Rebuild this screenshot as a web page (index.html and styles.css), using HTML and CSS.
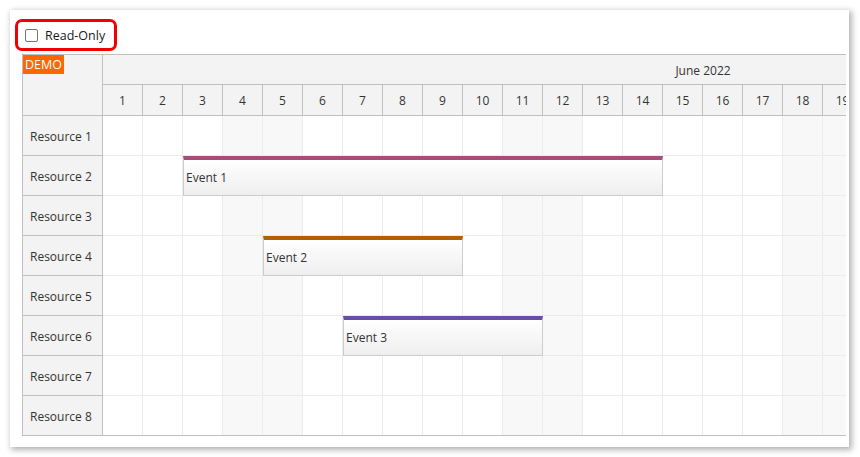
FILE: index.html
```html
<!DOCTYPE html>
<html>
<head>
<meta charset="utf-8">
<link rel="stylesheet" href="styles.css">
</head>
<body>
<div class="panel">
  <label class="ro"><span class="cb"></span><span class="ro-text">Read-Only</span></label>
  <div class="sched">
    <div class="rh">
      <div class="corner"><span class="demo">DEMO</span></div>
      <div class="rhc">Resource 1</div>
      <div class="rhc">Resource 2</div>
      <div class="rhc">Resource 3</div>
      <div class="rhc">Resource 4</div>
      <div class="rhc">Resource 5</div>
      <div class="rhc">Resource 6</div>
      <div class="rhc">Resource 7</div>
      <div class="rhc">Resource 8</div>
    </div>
    <div class="tl">
      <div class="tl-inner">
        <div class="month">June 2022</div>
        <div class="days">
          <div class="day">1</div><div class="day">2</div><div class="day">3</div><div class="day">4</div><div class="day">5</div>
          <div class="day">6</div><div class="day">7</div><div class="day">8</div><div class="day">9</div><div class="day">10</div>
          <div class="day">11</div><div class="day">12</div><div class="day">13</div><div class="day">14</div><div class="day">15</div>
          <div class="day">16</div><div class="day">17</div><div class="day">18</div><div class="day">19</div><div class="day">20</div>
          <div class="day">21</div><div class="day">22</div><div class="day">23</div><div class="day">24</div><div class="day">25</div>
          <div class="day">26</div><div class="day">27</div><div class="day">28</div><div class="day">29</div><div class="day">30</div>
        </div>
        <div class="grid">
          <div class="cols">
            <div class="col"></div><div class="col"></div><div class="col"></div><div class="col we"></div><div class="col we"></div>
            <div class="col"></div><div class="col"></div><div class="col"></div><div class="col"></div><div class="col"></div>
            <div class="col we"></div><div class="col we"></div><div class="col"></div><div class="col"></div><div class="col"></div>
            <div class="col"></div><div class="col"></div><div class="col we"></div><div class="col we"></div><div class="col"></div>
            <div class="col"></div><div class="col"></div><div class="col"></div><div class="col"></div><div class="col we"></div>
            <div class="col we"></div><div class="col"></div><div class="col"></div><div class="col"></div><div class="col"></div>
          </div>
          <div class="rowlines"></div>
          <div class="ev ev1" style="top:40px;left:80px;width:480px">Event 1</div>
          <div class="ev ev2" style="top:120px;left:160px;width:200px">Event 2</div>
          <div class="ev ev3" style="top:200px;left:240px;width:200px">Event 3</div>
        </div>
      </div>
    </div>
  </div>
</div>
</body>
</html>
```
FILE: styles.css
```css
html, body {
  margin: 0;
  padding: 0;
  background: #ffffff;
}
body {
  height: 457px;
  overflow: hidden;
  font-family: "Open Sans", "Noto Sans", sans-serif;
  font-size: 12px;
  color: #333;
}
.panel {
  position: relative;
  margin: 10px 0 0 10px;
  width: 839px;
  height: 437px;
  background: #fff;
  box-shadow: 2px 2px 6px 1px rgba(0, 0, 0, 0.3);
  padding: 9px 0 0 5px;
  box-sizing: border-box;
}
.ro {
  display: inline-flex;
  align-items: center;
  height: 32px;
  width: 102px;
  box-sizing: border-box;
  border: 3px solid #f00000;
  border-radius: 7px;
  padding: 1px 0 0 7px;
  font-size: 12.5px;
  color: #1a1a1a;
}
.cb {
  width: 13px;
  height: 13px;
  box-sizing: border-box;
  border: 1px solid #767676;
  border-radius: 2px;
  background: #fff;
  margin: -1px 7px 0 0;
}
.sched {
  display: flex;
  margin: 3px 0 0 7px;
  width: 823px;
  border-left: 1px solid #c0c0c0;
  border-top: 1px solid #c0c0c0;
  border-bottom: 1px solid #c0c0c0;
}
.rh {
  width: 80px;
  flex: none;
  border-right: 1px solid #c0c0c0;
  box-sizing: border-box;
  background: #f3f3f3;
}
.corner {
  height: 60px;
  border-bottom: 1px solid #c0c0c0;
}
.demo {
  display: inline-block;
  background: #ff6600;
  color: #fff;
  font-size: 12.5px;
  line-height: 19px;
  padding: 0 2px;
}
.rhc {
  height: 39px;
  border-bottom: 1px solid #c0c0c0;
  display: flex;
  align-items: center;
  padding: 2px 0 0 7px;
  box-sizing: border-box;
  height: 40px;
}
.rhc:last-child {
  border-bottom: none;
  height: 39px;
}
.tl {
  flex: 1;
  overflow: hidden;
}
.tl-inner {
  width: 1200px;
}
.month {
  height: 29px;
  border-bottom: 1px solid #c0c0c0;
  background: #f3f3f3;
  display: flex;
  align-items: center;
  justify-content: center;
  padding-top: 2px;
  box-sizing: content-box;
  height: 27px;
}
.days {
  display: flex;
  height: 30px;
  border-bottom: 1px solid #c0c0c0;
  background: #f3f3f3;
}
.day {
  width: 40px;
  flex: none;
  box-sizing: border-box;
  border-right: 1px solid #c0c0c0;
  display: flex;
  align-items: center;
  justify-content: center;
}
.grid {
  position: relative;
  height: 319px;
  overflow: hidden;
}
.cols {
  display: flex;
  height: 100%;
}
.col {
  width: 40px;
  flex: none;
  box-sizing: border-box;
  border-right: 1px solid #ebebeb;
  background: #fff;
}
.col.we {
  background: #f8f8f8;
}
.rowlines {
  position: absolute;
  inset: 0;
  background: repeating-linear-gradient(to bottom, transparent 0, transparent 39px, #ebebeb 39px, #ebebeb 40px);
}
.ev {
  position: absolute;
  height: 40px;
  box-sizing: border-box;
  border: 1px solid #cccccc;
  border-top: 4px solid;
  background: linear-gradient(to bottom, #ffffff 0%, #eeeeee 100%);
  padding-left: 2px;
  display: flex;
  align-items: center;
  color: #333;
}
.ev1 { border-top-color: #a64d79; }
.ev2 { border-top-color: #b45f06; }
.ev3 { border-top-color: #674ea7; }
```
